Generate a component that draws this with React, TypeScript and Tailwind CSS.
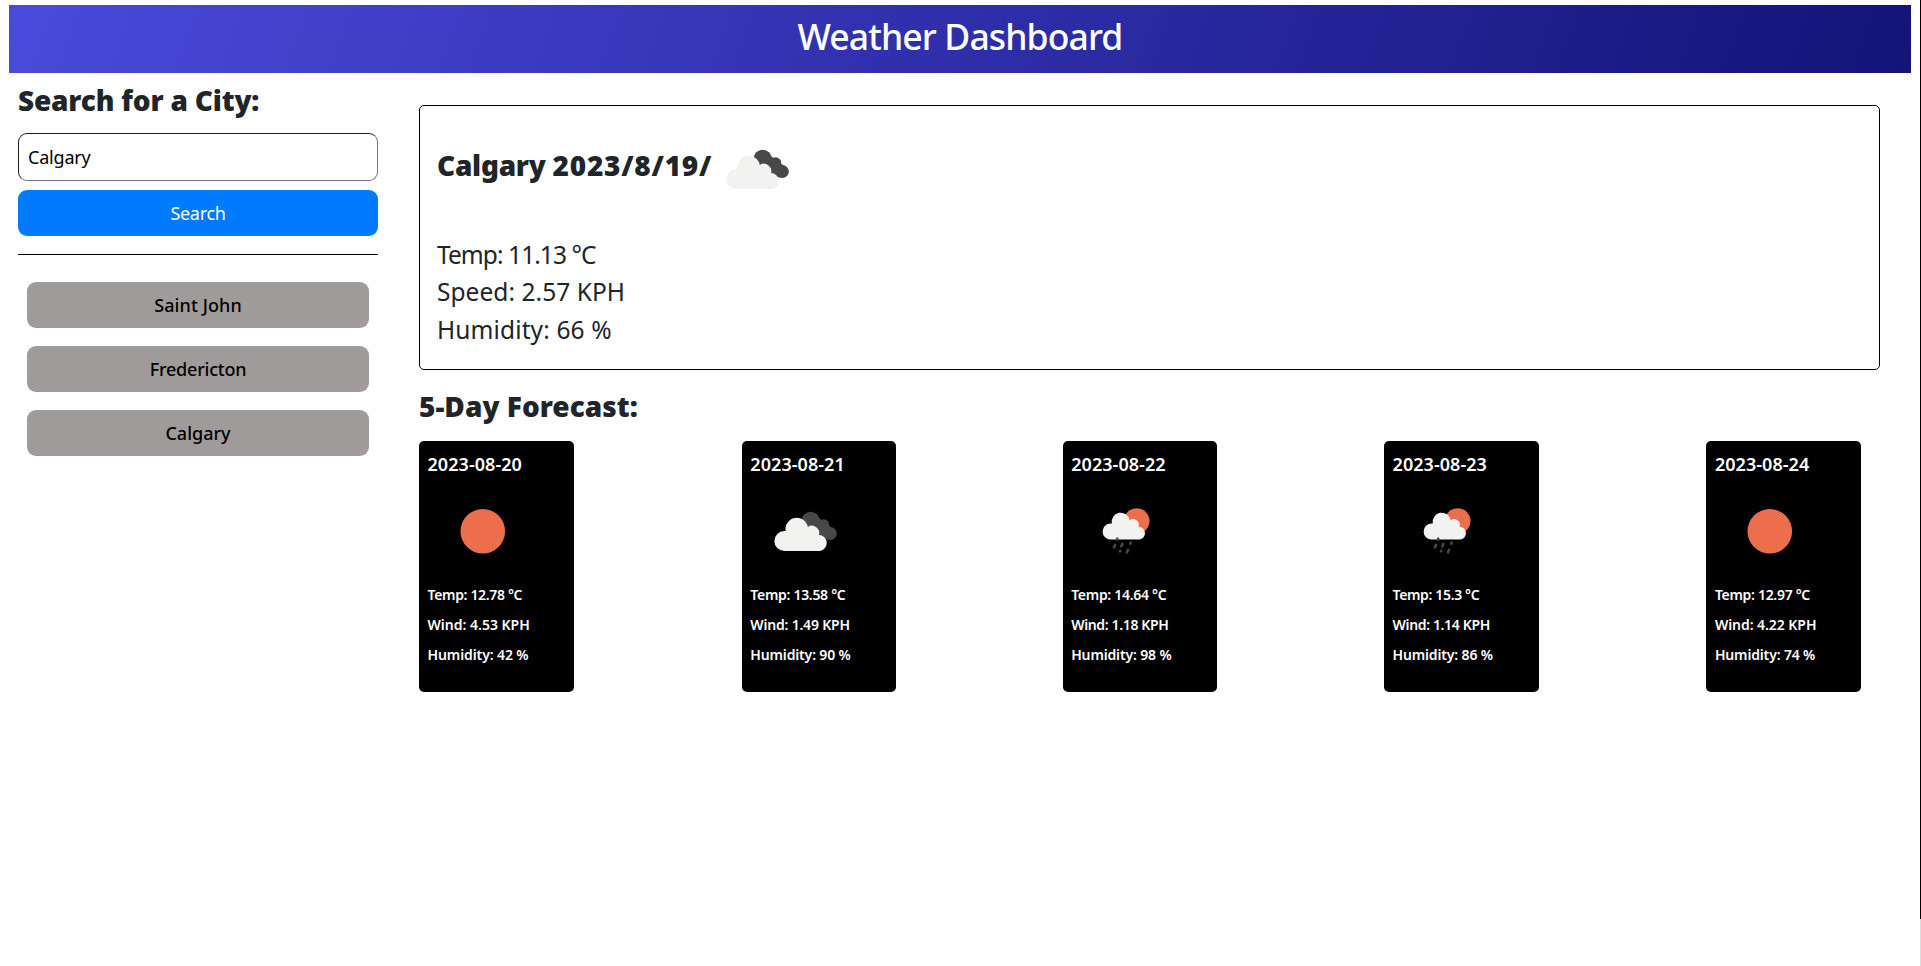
type Sky = "sun" | "clouds" | "rain";

interface Line {
  text: string;
  tracking: string;
}

interface Day {
  date: string;
  sky: Sky;
  lines: Line[];
}

const cities: Line[] = [
  { text: "Saint John", tracking: "tracking-[0.1px]" },
  { text: "Fredericton", tracking: "tracking-[-0.23px]" },
  { text: "Calgary", tracking: "tracking-normal" },
];

const current: Line[] = [
  { text: "Temp: 11.13 °C", tracking: "tracking-[-0.93px]" },
  { text: "Speed: 2.57 KPH", tracking: "tracking-[0.05px]" },
  { text: "Humidity: 66 %", tracking: "tracking-[0.12px]" },
];

const days: Day[] = [
  {
    date: "2023-08-20",
    sky: "sun",
    lines: [
      { text: "Temp: 12.78 °C", tracking: "tracking-[-0.33px]" },
      { text: "Wind: 4.53 KPH", tracking: "tracking-normal" },
      { text: "Humidity: 42 %", tracking: "tracking-[-0.1px]" },
    ],
  },
  {
    date: "2023-08-21",
    sky: "clouds",
    lines: [
      { text: "Temp: 13.58 °C", tracking: "tracking-[-0.3px]" },
      { text: "Wind: 1.49 KPH", tracking: "tracking-[-0.2px]" },
      { text: "Humidity: 90 %", tracking: "tracking-[-0.15px]" },
    ],
  },
  {
    date: "2023-08-22",
    sky: "rain",
    lines: [
      { text: "Temp: 14.64 °C", tracking: "tracking-[-0.3px]" },
      { text: "Wind: 1.18 KPH", tracking: "tracking-[-0.35px]" },
      { text: "Humidity: 98 %", tracking: "tracking-[-0.15px]" },
    ],
  },
  {
    date: "2023-08-23",
    sky: "rain",
    lines: [
      { text: "Temp: 15.3 °C", tracking: "tracking-[-0.35px]" },
      { text: "Wind: 1.14 KPH", tracking: "tracking-[-0.35px]" },
      { text: "Humidity: 86 %", tracking: "tracking-[-0.15px]" },
    ],
  },
  {
    date: "2023-08-24",
    sky: "sun",
    lines: [
      { text: "Temp: 12.97 °C", tracking: "tracking-[-0.3px]" },
      { text: "Wind: 4.22 KPH", tracking: "tracking-[-0.05px]" },
      { text: "Humidity: 74 %", tracking: "tracking-[-0.15px]" },
    ],
  },
];

function Cloud() {
  return (
    <path
      fill="#f2f2f1"
      d="M49 141a30 30 0 0 1 0-60q2 0 4 .3A33.5 33.5 0 1 1 119.500 69A22 22 0 0 1 153 93.300A24 24 0 0 1 156 141Z"
    />
  );
}

function SkyIcon({ sky, className }: { sky: Sky; className: string }) {
  return (
    <svg viewBox="0 0 100 100" className={`block size-[100px] shrink-0 ${className}`} aria-hidden="true">
      {sky === "sun" && <circle cx="49.800" cy="50.300" r="22.300" fill="#ec6e4c" />}
      {sky === "clouds" && (
        <g transform="translate(12 23) scale(0.3333)">
          <g fill="#48484a">
            <circle cx="128" cy="50" r="27" />
            <circle cx="167" cy="63" r="17" />
            <circle cx="187" cy="88.500" r="19.500" />
            <path d="M128 77L150 40L190 70L182 107L150 100Z" />
          </g>
          <Cloud />
        </g>
      )}
      {sky === "rain" && (
        <g transform="translate(19 21) scale(0.3333)">
          <circle cx="122" cy="57" r="38.500" fill="#ec6e4c" />
          <g transform="translate(4.500 -1.300) scale(0.808)">
            <Cloud />
          </g>
          <g stroke="#48484a" strokeWidth="8" strokeLinecap="round">
            <path d="M64 110l-1 3" />
            <path d="M57 129l-3 7" />
            <path d="M79 126l-3 7" />
            <path d="M104 122l-1 3" />
            <path d="M73 147l-1 1" />
            <path d="M96 144l-3 7" />
          </g>
        </g>
      )}
    </svg>
  );
}

export default function App() {
  return (
    <div className="flex h-[966px] w-[1921px] overflow-hidden bg-white font-['Noto_Sans','Open_Sans',sans-serif] text-[#212529]">
      <div className="w-[1920px] px-[9px] pt-[5px]">
        <header className="h-[68px] bg-[linear-gradient(110deg,#4a4adc,#131378)]">
          <h1 className="text-center text-[35.5px] leading-[63px] font-medium tracking-[-0.88px] text-white">
            Weather Dashboard
          </h1>
        </header>

        <div className="flex">
          <aside className="ml-[9px] w-[360px] pt-2">
            <h2 className="text-[28px] leading-[38px] font-black tracking-[-0.18px]">Search for a City:</h2>
            <input
              type="text"
              defaultValue="Calgary"
              className="mt-[14px] block h-12 w-full rounded-[9px] border border-t-[#1c1c1c] border-r-[#767676] border-b-[#767676] border-l-[#1c1c1c] px-[9px] text-[18px] font-normal tracking-[-0.2px] text-black outline-none"
            />
            <button className="mt-[9px] block h-[46px] w-full rounded-[9px] bg-[#007bff] text-[18px] font-normal tracking-[-0.3px] text-white">
              Search
            </button>
            <div className="mt-[18px] h-px bg-black" />
            <div className="mt-[27px] flex flex-col gap-[18px] px-[9px]">
              {cities.map((c) => (
                <button
                  key={c.text}
                  className={`h-[46px] rounded-[9px] bg-[#a09b9b] text-[18px] font-medium text-black ${c.tracking}`}
                >
                  {c.text}
                </button>
              ))}
            </div>
          </aside>

          <main className="ml-[41px] w-[1461px] pt-8">
            <section className="h-[265px] rounded-[5px] border border-black px-[17px] pt-[9px]">
              <div className="flex h-[100px]">
                <h2 className="w-[271px] text-[28px] leading-[100px] font-black tracking-[0.75px] whitespace-nowrap">
                  <span className="tracking-[-0.25px]">Calgary </span>2023/8/19/
                </h2>
                <SkyIcon sky="clouds" className="mt-1" />
              </div>
              <div className="mt-[20.5px]">
                {current.map((l) => (
                  <p key={l.text} className={`text-[24.5px] leading-[37.5px] ${l.tracking}`}>
                    {l.text}
                  </p>
                ))}
              </div>
            </section>

            <h2 className="mt-[17px] text-[28px] leading-[38px] font-black tracking-[0.02px]">5-Day Forecast:</h2>

            <div className="mt-4 flex w-[1442px] justify-between">
              {days.map((d) => (
                <article
                  key={d.date}
                  className="h-[251px] w-[154.6px] rounded-[5px] bg-black pt-[9px] pl-[8.5px] text-white nth-[2]:-mr-px nth-[2]:ml-px nth-[4]:mr-[0.5px] nth-[4]:-ml-[0.5px]"
                >
                  <h3 className="text-[18px] leading-[28px] font-semibold tracking-[0.05px]">{d.date}</h3>
                  <SkyIcon sky={d.sky} className="mt-[3px] ml-[5.5px]" />
                  <div className="mt-[3px] flex flex-col gap-[9.2px]">
                    {d.lines.map((l) => (
                      <p key={l.text} className={`text-[14px] leading-[21px] font-semibold ${l.tracking}`}>
                        {l.text}
                      </p>
                    ))}
                  </div>
                </article>
              ))}
            </div>
          </main>
        </div>
      </div>
      <div className="flex w-px flex-col">
        <div className="h-[919px] bg-black" />
        <div className="flex-1 bg-[#dcdcdc]" />
      </div>
    </div>
  );
}
